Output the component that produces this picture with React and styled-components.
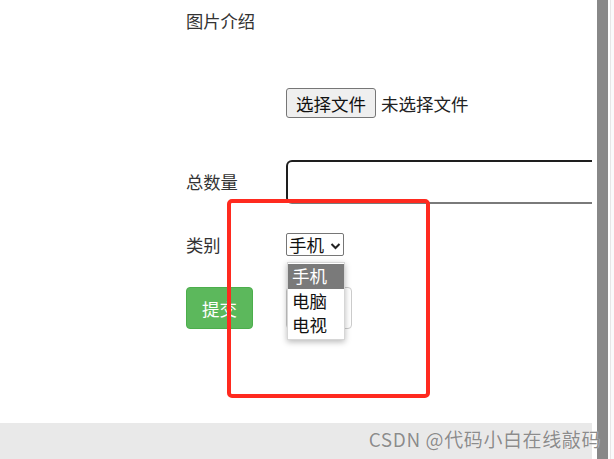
import React from "react";
import styled, { createGlobalStyle } from "styled-components";

const GlobalStyle = createGlobalStyle`
  html, body {
    margin: 0;
    padding: 0;
    background: #ffffff;
  }
  body {
    font-family: "Noto Sans CJK SC", "Liberation Sans", sans-serif;
    color: #333333;
    overflow: hidden;
  }
`;

function App() {
  return (
    <>
      <GlobalStyle />
      <Shell>
        <Main>
          <Form>
            <Row $top={9} $height={24}>
              <Label>图片介绍</Label>
            </Row>
            <Row $top={55} $height={30}>
              <Label />
              <FileButton>选择文件</FileButton>
              <FileName>未选择文件</FileName>
            </Row>
            <Row $top={42} $height={44}>
              <Label>总数量</Label>
              <TextInput />
            </Row>
            <Row $top={29} $height={23}>
              <Label>类别</Label>
              <SelectWrap>
                <Select>
                  手机
                  <svg width="11" height="8" viewBox="0 0 11 8">
                    <path
                      d="M1.5 2 L5.5 6 L9.5 2"
                      fill="none"
                      stroke="#222"
                      strokeWidth="2"
                    />
                  </svg>
                </Select>
                <Options>
                  <Option $selected>手机</Option>
                  <Option>电脑</Option>
                  <Option>电视</Option>
                </Options>
              </SelectWrap>
            </Row>
            <Row $top={31} $height={42}>
              <SubmitButton>提交</SubmitButton>
              {/* 重置按钮被下拉框挡住了 */}
              <ResetButton />
            </Row>
          </Form>
          <Footer />
        </Main>
        <ScrollTrack>
          <ScrollThumb />
          <ScrollEdge />
        </ScrollTrack>
        <Marker />
        <Watermark>CSDN @代码小白在线敲码</Watermark>
      </Shell>
    </>
  );
}

export default App;

const Shell = styled.div`
  position: relative;
  width: 614px;
  height: 459px;
  display: flex;
  overflow: hidden;
`;

const Main = styled.div`
  width: 592px;
  height: 100%;
  display: flex;
  flex-direction: column;
  overflow: hidden;
`;

const Form = styled.div`
  flex: 1;
  display: flex;
  flex-direction: column;
  padding-left: 186px;
`;

const Row = styled.div`
  display: flex;
  align-items: center;
  margin-top: ${(p) => p.$top}px;
  height: ${(p) => p.$height}px;
  flex-shrink: 0;
`;

const Label = styled.div`
  width: 100px;
  flex-shrink: 0;
  font-size: 17.3px;
  line-height: 24px;
  color: #333333;
`;

const FileButton = styled.div`
  box-sizing: border-box;
  height: 30px;
  padding: 0 9px;
  display: flex;
  align-items: center;
  font-size: 17.5px;
  color: #111111;
  background: #efefef;
  border: 1px solid #767676;
  border-radius: 3px;
`;

const FileName = styled.div`
  margin-left: 5px;
  font-size: 17.5px;
  color: #222222;
`;

const TextInput = styled.div`
  box-sizing: border-box;
  width: 420px;
  height: 44px;
  flex-shrink: 0;
  border: 2px solid #1e1e1e;
  border-bottom-color: #7a7a7a;
  border-radius: 6px;
  background: #ffffff;
`;

const SelectWrap = styled.div`
  position: relative;
  height: 100%;
`;

const Select = styled.div`
  box-sizing: border-box;
  height: 23px;
  width: 58px;
  padding: 0 2px 0 2px;
  display: flex;
  align-items: center;
  justify-content: space-between;
  font-size: 17.5px;
  color: #111111;
  border: 1px solid #767676;
  border-radius: 2px;
  background: #ffffff;

  svg {
    margin-top: 2px;
  }
`;

const Options = styled.div`
  position: absolute;
  top: 29px;
  left: 1px;
  width: 56px;
  padding: 1px 0;
  background: #ffffff;
  border: 1px solid #d6d6d6;
  box-shadow: 0 2px 6px rgba(0, 0, 0, 0.28);
  z-index: 2;
`;

const Option = styled.div`
  height: 24.5px;
  line-height: 24px;
  padding-left: 4px;
  font-size: 17.5px;
  color: ${(p) => (p.$selected ? "#ffffff" : "#111111")};
  background: ${(p) => (p.$selected ? "#7a7a7a" : "transparent")};
`;

const SubmitButton = styled.div`
  box-sizing: border-box;
  width: 67px;
  height: 42px;
  display: flex;
  align-items: center;
  justify-content: center;
  font-size: 17.5px;
  color: #ffffff;
  background: #5cb85c;
  border: 1px solid #4cae4c;
  border-radius: 4px;
`;

const ResetButton = styled.div`
  box-sizing: border-box;
  width: 66px;
  height: 42px;
  margin-left: 33px;
  background: #ffffff;
  border: 1px solid #cccccc;
  border-radius: 4px;
`;

const Footer = styled.div`
  height: 36px;
  flex-shrink: 0;
  background: #e9e9e9;
`;

const ScrollTrack = styled.div`
  flex: 1;
  display: flex;
  padding-left: 5px;
  background: #ffffff;
`;

const ScrollThumb = styled.div`
  width: 11px;
  background: #888888;
`;

const ScrollEdge = styled.div`
  flex: 1;
  background: #fafafa;
  border-left: 2px solid #fdfdfd;
  box-shadow: inset 1px 0 0 #e6e6e6;
`;

const Marker = styled.div`
  position: absolute;
  left: 227px;
  top: 199px;
  width: 203px;
  height: 199px;
  box-sizing: border-box;
  border: 4px solid #ff2a1f;
  border-radius: 5px;
  z-index: 3;
`;

const Watermark = styled.div`
  position: absolute;
  right: 13px;
  bottom: 8px;
  font-size: 19px;
  line-height: 24px;
  letter-spacing: 0.6px;
  color: #8c8c8c;
  text-shadow: 0 0 1px #ffffff;
  white-space: nowrap;
  z-index: 3;
`;
